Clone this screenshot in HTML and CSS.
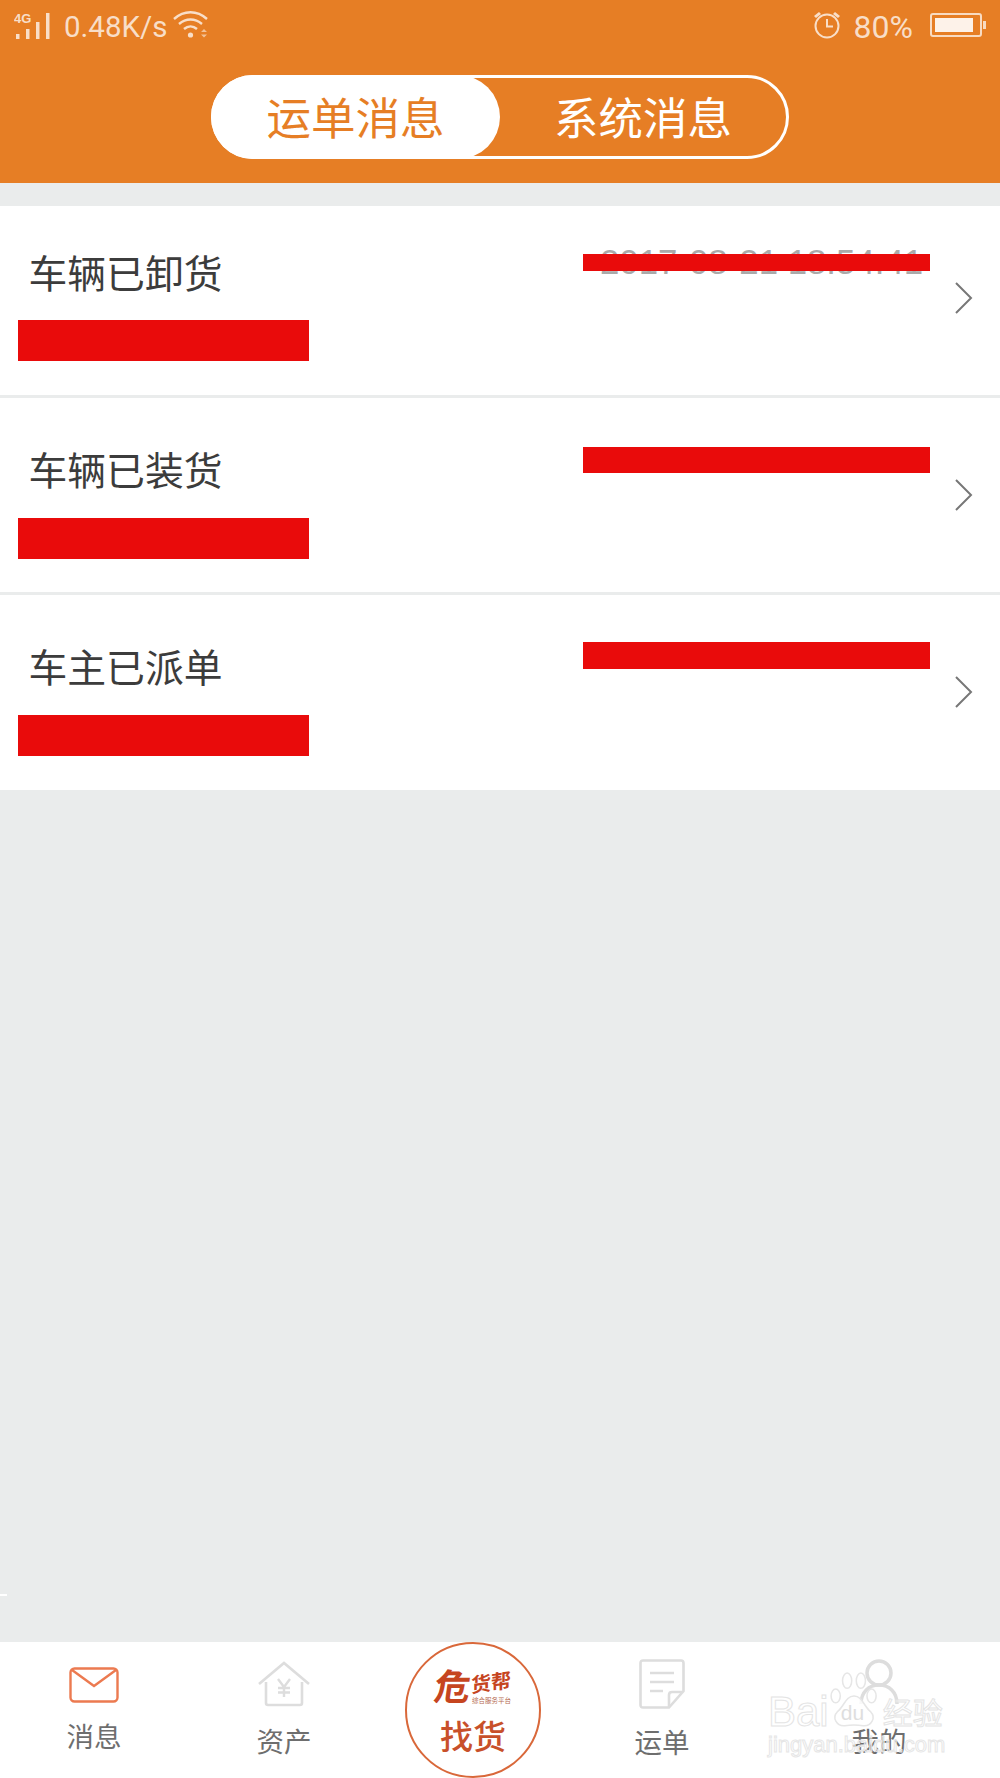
FILE: index.html
```html
<!DOCTYPE html>
<html lang="zh-CN">
<head>
    <meta charset="UTF-8">
    <meta name="viewport" content="width=device-width, initial-scale=1.0">
    <title>消息</title>
    <link rel="stylesheet" href="styles.css">
</head>
<body>

<div class="page">
    <header class="header">
        <div class="status">
            <div class="status-left">
                <svg class="icon-signal" width="38" height="28" viewBox="0 0 38 28">
                    <text x="0" y="11" class="signal-text">4G</text>
                    <rect x="2" y="22" width="3.5" height="5" fill="currentColor"/>
                    <rect x="12" y="17" width="3.5" height="10" fill="currentColor"/>
                    <rect x="22" y="10" width="3.5" height="17" fill="currentColor"/>
                    <rect x="32" y="1" width="3.5" height="26" fill="currentColor"/>
                </svg>
                <span class="speed">0.48K/s</span>
                <svg class="icon-wifi" width="36" height="28" viewBox="0 0 36 28">
                    <path d="M1 8 C11 -1 24 -1 34 8" fill="none" stroke="currentColor" stroke-width="2.4"/>
                    <path d="M6 13 C13 7 22 7 29 13" fill="none" stroke="currentColor" stroke-width="2.4"/>
                    <path d="M11 18 C15 14.500 20 14.500 24 18" fill="none" stroke="currentColor" stroke-width="2.4"/>
                    <circle cx="17.500" cy="24" r="2.600" fill="currentColor"/>
                    <path d="M28 21 h6 l-3 -3z M28 23.500 h6 l-3 3z" fill="currentColor" opacity="0.7"/>
                </svg>
            </div>
            <div class="status-right">
                <svg class="icon-alarm" width="28" height="28" viewBox="0 0 28 28">
                    <circle cx="14" cy="15" r="11.500" fill="none" stroke="currentColor" stroke-width="2"/>
                    <path d="M14 8 V15.500 H20" fill="none" stroke="currentColor" stroke-width="2"/>
                    <path d="M1 5 L6 1 L8 3 L3 7z M27 5 L22 1 L20 3 L25 7z" fill="currentColor"/>
                </svg>
                <span class="battery-text">80%</span>
                <div class="battery">
                    <div class="battery-fill"></div>
                </div>
            </div>
        </div>
        <div class="tabs">
            <div class="tab tab-active">运单消息</div>
            <div class="tab">系统消息</div>
        </div>
    </header>

    <main class="list">
        <div class="row row-first">
            <div class="row-main">
                <div class="row-title">车辆已卸货</div>
                <div class="redact redact-name"></div>
            </div>
            <div class="row-time">
                <span class="time-text">2017-08-21 18:54:41</span>
                <div class="redact redact-over"></div>
            </div>
            <svg class="chevron" width="20" height="34" viewBox="0 0 20 34">
                <path d="M2 2 L17 17 L2 32" fill="none" stroke="#777" stroke-width="2"/>
            </svg>
        </div>
        <div class="row">
            <div class="row-main">
                <div class="row-title">车辆已装货</div>
                <div class="redact redact-name"></div>
            </div>
            <div class="row-time">
                <div class="redact redact-time"></div>
            </div>
            <svg class="chevron" width="20" height="34" viewBox="0 0 20 34">
                <path d="M2 2 L17 17 L2 32" fill="none" stroke="#777" stroke-width="2"/>
            </svg>
        </div>
        <div class="row row-last">
            <div class="row-main">
                <div class="row-title">车主已派单</div>
                <div class="redact redact-name"></div>
            </div>
            <div class="row-time">
                <div class="redact redact-time"></div>
            </div>
            <svg class="chevron" width="20" height="34" viewBox="0 0 20 34">
                <path d="M2 2 L17 17 L2 32" fill="none" stroke="#777" stroke-width="2"/>
            </svg>
        </div>
    </main>

    <div class="edge-mark"></div>

    <nav class="nav">
        <div class="nav-item nav-msg">
            <svg width="50" height="36" viewBox="0 0 50 36">
                <rect x="1.500" y="1.500" width="47" height="33" rx="4" fill="none" stroke="#ec7a50" stroke-width="2.400"/>
                <path d="M3 3 L25 19 L47 3" fill="none" stroke="#ec7a50" stroke-width="2.400"/>
            </svg>
            <span class="nav-label">消息</span>
        </div>
        <div class="nav-item nav-asset">
            <svg width="52" height="46" viewBox="0 0 52 46">
                <path d="M1 23 L26 2 L51 23" fill="none" stroke="#ddd" stroke-width="2.600"/>
                <path d="M8 21 V42 Q8 44 10 44 H42 Q44 44 44 42 V21" fill="none" stroke="#ddd" stroke-width="2.600"/>
                <path d="M20 18 L26 26 L32 18 M26 26 V36 M20 27 H32 M20 31.500 H32" fill="none" stroke="#ddd" stroke-width="2.400"/>
            </svg>
            <span class="nav-label">资产</span>
        </div>
        <div class="nav-item nav-find">
            <div class="find-circle">
                <div class="find-logo">
                    <span class="logo-big">危</span>
                    <div class="logo-side">
                        <span class="logo-name">货帮</span>
                        <span class="logo-sub">综合服务平台</span>
                    </div>
                </div>
                <span class="find-label">找货</span>
            </div>
        </div>
        <div class="nav-item nav-order">
            <svg width="46" height="50" viewBox="0 0 46 50">
                <path d="M4 1.500 H42 Q44.500 1.500 44.500 4 V32 L30 48.500 H4 Q1.500 48.500 1.500 46 V4 Q1.500 1.500 4 1.500z" fill="none" stroke="#ddd" stroke-width="2.600"/>
                <path d="M30 48 V36 Q30 33 33 33 H44" fill="none" stroke="#ddd" stroke-width="2.600"/>
                <path d="M11 14 H35 M11 23 H35 M11 32 H24" fill="none" stroke="#ddd" stroke-width="2.400"/>
            </svg>
            <span class="nav-label">运单</span>
        </div>
        <div class="nav-item nav-mine">
            <svg width="56" height="46" viewBox="0 0 56 46">
                <circle cx="28" cy="15" r="12" fill="none" stroke="#ddd" stroke-width="3.500"/>
                <path d="M10 46 C10 34 18 27 28 27 C38 27 46 34 46 46" fill="none" stroke="#ddd" stroke-width="3.500"/>
            </svg>
            <span class="nav-label">我的</span>
        </div>

        <div class="watermark">
            <div class="wm-top">
                <span class="wm-bai">Bai</span>
                <div class="wm-paw">
                    <svg width="50" height="58" viewBox="0 0 62 76">
                        <ellipse cx="7" cy="34" rx="6" ry="9" fill="#fff" fill-opacity="0.6" stroke="#e6e6e6" stroke-width="2"/>
                        <ellipse cx="22" cy="14" rx="6" ry="10" fill="#fff" fill-opacity="0.6" stroke="#e6e6e6" stroke-width="2"/>
                        <ellipse cx="40" cy="14" rx="6" ry="10" fill="#fff" fill-opacity="0.6" stroke="#e6e6e6" stroke-width="2"/>
                        <ellipse cx="54" cy="34" rx="6" ry="9" fill="#fff" fill-opacity="0.6" stroke="#e6e6e6" stroke-width="2"/>
                        <path d="M31 34 C20 34 18 48 9 55 C2 62 8 74 19 73 C26 72 36 72 43 73 C54 74 60 62 53 55 C44 48 42 34 31 34z" fill="#fff" fill-opacity="0.8" stroke="#e6e6e6" stroke-width="2"/>
                    </svg>
                    <span class="wm-du">du</span>
                </div>
                <span class="wm-jy">经验</span>
            </div>
            <div class="wm-url">jingyan.baidu.com</div>
        </div>
    </nav>
</div>

</body>
</html>
```

FILE: styles.css
```css
* {
    box-sizing: border-box;
}
body {
    margin: 0;
    padding: 0;
    font-family: "Noto Sans CJK SC", "Noto Sans", sans-serif;
    background-color: #eaecec;
}
.page {
    position: relative;
    display: flex;
    flex-direction: column;
    width: 1000px;
    height: 1778px;
    overflow: hidden;
}

/* header */
.header {
    height: 183px;
    background-color: #e67e25;
    color: #fff;
}
.status {
    display: flex;
    justify-content: space-between;
    height: 75px;
    padding: 11px 15px 0 14px;
    color: rgba(255, 255, 255, 0.75);
}
.status-left, .status-right {
    display: flex;
    align-items: flex-start;
    height: 28px;
}
.icon-signal {
    margin-top: 1px;
}
.signal-text {
    font-family: "Liberation Sans", sans-serif;
    font-size: 13px;
    font-weight: 700;
    fill: currentColor;
}
.speed {
    margin-left: 12px;
    font-family: Roboto, sans-serif;
    font-size: 29.500px;
    line-height: 32px;
}
.icon-wifi {
    margin-left: 6px;
}
.battery-text {
    margin-left: 13px;
    font-family: Roboto, sans-serif;
    font-size: 32px;
    line-height: 32px;
}
.battery {
    position: relative;
    width: 52px;
    height: 24px;
    margin-left: 17px;
    margin-right: 3px;
    margin-top: 2px;
    padding: 3px;
    border: 2px solid rgba(255, 255, 255, 0.72);
    border-radius: 3px;
}
.battery::after {
    content: "";
    position: absolute;
    right: -6px;
    top: 6px;
    width: 3px;
    height: 8px;
    background-color: rgba(255, 255, 255, 0.72);
}
.battery-fill {
    width: 38px;
    height: 100%;
    background-color: #fdf2e9;
}
.tabs {
    display: flex;
    width: 578px;
    height: 84px;
    margin-left: 211px;
    border: 3px solid #fff;
    border-radius: 42px;
}
.tab {
    display: flex;
    flex: none;
    align-items: center;
    justify-content: center;
    width: 286px;
    margin: -3px 0;
    padding-bottom: 4px;
    font-size: 44.500px;
    color: #fff;
}
.tab-active {
    width: 289px;
    margin-left: -3px;
    background-color: #fff;
    border-radius: 42px;
    color: #e67e25;
}

/* message list */
.list {
    display: flex;
    flex-direction: column;
    gap: 3px;
    margin-top: 23px;
}
.row {
    display: flex;
    height: 194px;
    padding-top: 49px;
    background-color: #fff;
}
.row-first {
    height: 189px;
    padding-top: 44px;
}
.row-last {
    height: 195px;
}
.row-main {
    width: 583px;
    padding-left: 18px;
}
.row-title {
    margin-top: -2px;
    padding-left: 10.500px;
    font-size: 38.800px;
    line-height: 46px;
    color: #3c3c3c;
}
.redact {
    background-color: #e90b0b;
}
.redact-name {
    width: 291px;
    height: 41px;
    margin-top: 27px;
}
.row-first .redact-name {
    margin-top: 26px;
}
.row-time {
    position: relative;
    width: 347px;
}
.redact-time {
    height: 26px;
}
.row-last .redact-time {
    margin-top: -2px;
    height: 27px;
}
.time-text {
    display: block;
    padding-left: 17px;
    font-family: "Liberation Sans", sans-serif;
    font-size: 34.800px;
    line-height: 24px;
    color: #aaa;
    white-space: nowrap;
}
.redact-over {
    position: absolute;
    left: 0;
    top: 4px;
    width: 347px;
    height: 17px;
}
.chevron {
    margin-left: 24px;
    margin-top: 31px;
}

.edge-mark {
    position: absolute;
    left: 0;
    top: 1594px;
    width: 7px;
    height: 2px;
    background-color: #fff;
}

/* bottom nav */
.nav {
    position: relative;
    display: flex;
    height: 136px;
    margin-top: auto;
    background-color: #fff;
}
.nav-item {
    display: flex;
    flex-direction: column;
    align-items: center;
}
.nav-label {
    font-size: 27.500px;
    line-height: 34px;
    color: #6e6e6e;
}
.nav-msg {
    width: 188px;
    padding-top: 25px;
}
.nav-msg .nav-label {
    margin-top: 15px;
}
.nav-asset {
    width: 192px;
    padding-top: 19px;
}
.nav-asset .nav-label {
    margin-top: 16px;
}
.nav-find {
    width: 186px;
}
.nav-order {
    width: 192px;
    padding-top: 17px;
}
.nav-order .nav-label {
    margin-top: 15px;
}
.nav-mine {
    width: 242px;
    padding-top: 16px;
}
.nav-mine .nav-label {
    margin-top: 19px;
}
.find-circle {
    display: flex;
    flex-direction: column;
    align-items: center;
    width: 136px;
    height: 136px;
    padding-top: 17px;
    background-color: #fff;
    border: 2.500px solid #d9683a;
    border-radius: 50%;
}
.find-logo {
    display: flex;
    align-items: flex-end;
    height: 44px;
    color: #c6451f;
}
.logo-big {
    font-size: 36px;
    font-weight: 700;
    line-height: 42px;
    transform: skewX(-8deg);
}
.logo-side {
    display: flex;
    flex-direction: column;
    align-items: flex-end;
    width: 40px;
}
.logo-name {
    font-size: 20px;
    font-weight: 700;
    line-height: 26px;
    transform: skewY(-8deg);
    white-space: nowrap;
}
.logo-sub {
    margin-top: 1px;
    font-size: 6.500px;
    line-height: 9px;
    white-space: nowrap;
    color: #b56a50;
}
.find-label {
    margin-top: 10px;
    font-size: 33px;
    font-weight: 500;
    line-height: 40px;
    color: #c8502a;
}

/* baidu watermark, sits over the last tab */
.watermark {
    position: absolute;
    left: 768px;
    top: 28px;
    width: 180px;
    display: flex;
    flex-direction: column;
}
.wm-top {
    display: flex;
    align-items: flex-end;
    height: 58px;
}
.wm-bai {
    margin-bottom: -2px;
    font-family: "Liberation Sans", sans-serif;
    font-size: 42px;
    line-height: 36px;
    color: rgba(255, 255, 255, 0.5);
    -webkit-text-stroke: 1px #e4e4e4;
}
.wm-paw {
    position: relative;
    width: 50px;
    height: 58px;
    margin-right: 4px;
}
.wm-du {
    position: absolute;
    left: 12px;
    top: 31px;
    font-family: "Liberation Sans", sans-serif;
    font-size: 21px;
    line-height: 24px;
    color: #dedede;
}
.wm-jy {
    font-size: 30px;
    line-height: 34px;
    color: rgba(255, 255, 255, 0.5);
    -webkit-text-stroke: 1px #e4e4e4;
    white-space: nowrap;
}
.wm-url {
    margin-top: 4px;
    font-family: "Liberation Sans", sans-serif;
    font-size: 22px;
    line-height: 26px;
    color: rgba(255, 255, 255, 0.4);
    -webkit-text-stroke: 1px #e6e6e6;
    white-space: nowrap;
}
```
